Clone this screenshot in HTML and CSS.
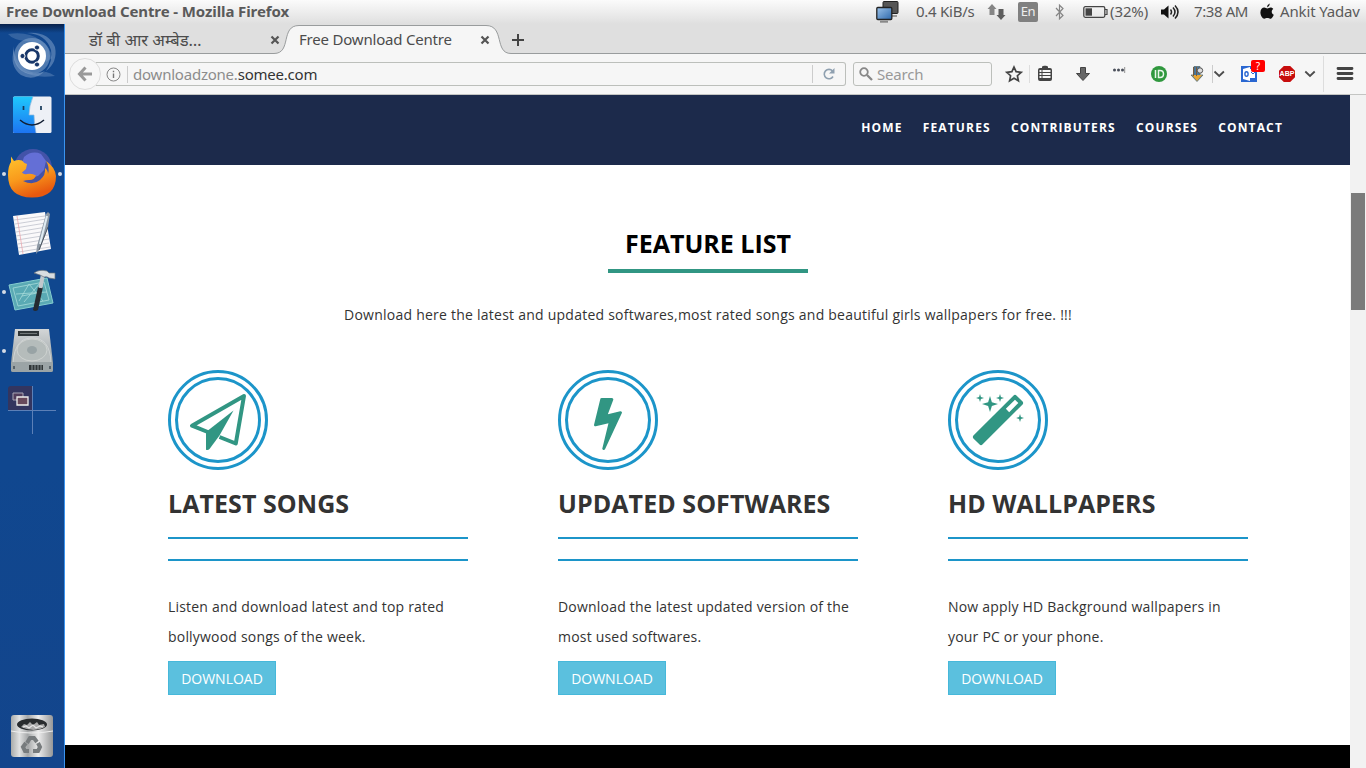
FILE: index.html
```
<!DOCTYPE html>
<html lang="en">
<head>
<meta charset="utf-8">
<title>Free Download Centre</title>
<link rel="stylesheet" href="styles.css">
</head>
<body>
<div class="desktop">
  <header class="panel">
    <div class="panel-title">Free Download Centre - Mozilla Firefox</div>
    <svg class="panel-net" width="24" height="24" viewBox="0 0 24 24">
      <defs><linearGradient id="scr" x1="0" y1="0" x2="1" y2="1"><stop offset="0" stop-color="#9cc3ea"/><stop offset="1" stop-color="#2d68ab"/></linearGradient></defs>
      <rect x="7" y="1.500" width="15" height="12" rx="1" fill="#555" stroke="#222"/><path d="M16 16h5" stroke="#999" stroke-width="2"/>
      <rect x=".8" y="7.500" width="15" height="12" rx="1" fill="url(#scr)" stroke="#222" stroke-width="1.300"/><path d="M4 21.700h8" stroke="#888" stroke-width="2"/>
    </svg>
    <div class="panel-rate">0.4 KiB/s</div>
    <svg class="panel-arrows" width="20" height="24" viewBox="0 0 20 24"><path d="M5 4l4.500 5H7.500v6h-5V9H.5z" fill="#858585"/><path d="M14 20l-4.500-5h2V9h5v6h2z" fill="#5d5d5d"/></svg>
    <div class="panel-lang">En</div>
    <svg class="panel-bt" width="10" height="24" viewBox="0 0 10 24"><path d="M1 8l7 7.500-3.500 3.300V5.200L8 8.500 1 16" fill="none" stroke="#858585" stroke-width="1.200"/></svg>
    <svg class="panel-battery" width="26" height="24" viewBox="0 0 26 24"><rect x=".8" y="6.700" width="21" height="10.600" rx="1.500" fill="none" stroke="#444" stroke-width="1.300"/><path d="M22 9.500h2v5h-2" fill="none" stroke="#444" stroke-width="1.200"/><path d="M2.500 8.300h6.500v7.400H2.500z" fill="#444"/></svg>
    <div class="panel-pct">(32%)</div>
    <svg class="panel-vol" width="20" height="24" viewBox="0 0 20 24"><path d="M0 9.500h3l4.500-4v13L3 14.500H0z" fill="#111"/><path d="M9.500 9.500q2 2.500 0 5M12 7.500q4 4.500 0 9M14 5.500q6 6.500 0 13" fill="none" stroke="#222" stroke-width="1.500"/></svg>
    <div class="panel-time">7:38 AM</div>
    <svg class="panel-apple" width="14" height="24" viewBox="0 0 14 24"><path d="M9.800 3.500q.1 2.700-2.900 3.900Q7 4.500 9.800 3.500zM7.200 8.400c1.300 0 2-.9 3.400-.9 1 0 2 .5 2.700 1.500-2.300 1.400-2 4.600.5 5.700-.8 2-2 4.100-3.500 4.100-1.200 0-1.600-.7-3-.7s-1.900.7-3 .7C2.500 18.800.4 15.500.4 12.600c0-3.200 1.900-5 3.900-5 1.200 0 2.200.8 2.900.8z" fill="#111"/></svg>
    <div class="panel-user">Ankit Yadav</div>
  </header>

  <aside class="launcher">
    <svg class="app" width="64" height="59" viewBox="0 0 64 59">
      <circle cx="32" cy="29" r="18" fill="#9db8da" opacity=".45"/>
      <g fill="#86a5cd"><path d="M8 7q20-3 32 6 11 7 12 18l-6 4Q44 14 26 14 13 13 8 7z" opacity=".3"/><path d="M13 19q-1 16 8 24 12 9 34 6-4-3-9-4-16 3-23-5-8-6-10-21z" opacity=".35"/><path d="M27 6q19 1 24 17 2 11-5 21 12-9 9-24Q48 4 27 6z" opacity=".5"/><path d="M14 22q-1 15 9 22 10 6 22 0-11 11-24 4Q9 39 14 22z" opacity=".5"/></g>
      <circle cx="32" cy="29" r="14" fill="#fff"/><circle cx="32" cy="29" r="6.300" fill="none" stroke="#173669" stroke-width="3"/><g fill="#173669" stroke="#fff" stroke-width="1"><circle cx="22.500" cy="29" r="2.600"/><circle cx="37" cy="20.500" r="2.600"/><circle cx="37" cy="37.500" r="2.600"/></g>
    </svg>
    <svg class="app" width="64" height="59" viewBox="0 0 64 59">
      <defs><linearGradient id="fa" x1="0" y1="0" x2="0" y2="1"><stop offset="0" stop-color="#1fc8fc"/><stop offset="1" stop-color="#1d74f2"/></linearGradient></defs>
      <rect x="13" y="10.500" width="38.500" height="36.500" rx="1.500" fill="#edf0f6"/><path d="M14.500 10.500H33Q29 20 29 29h5q0 9 2 18H14.500Q13 47 13 45.500V12q0-1.500 1.500-1.500z" fill="url(#fa)"/>
      <path d="M33 10.500Q29 20 29 29h5q0 9 2 18" fill="none" stroke="#8fb4da" stroke-width=".7"/><path d="M23.500 20v4M41 20v4" fill="none" stroke="#153959" stroke-width="1.700"/><path d="M20 34q12 10 24 0" fill="none" stroke="#111d32" stroke-width="1.500"/>
    </svg>
    <svg class="app" width="64" height="59" viewBox="0 0 64 59">
      <defs><linearGradient id="fx" x1="0" y1="0" x2=".4" y2="1"><stop offset="0" stop-color="#ffc52e"/><stop offset=".55" stop-color="#f99a1c"/><stop offset="1" stop-color="#e8590f"/></linearGradient></defs>
      <circle cx="33" cy="23" r="19" fill="#4353a8"/><path d="M24 12q8-7 17-3l5 7-2 9-6 6-11 3-6-8 4-5-3-3z" fill="#646fd6"/>
      <path d="M11 11.500l3 4.500q4-1.500 8-.5 2 3 5 3.500l-1 5-4 3.500q2 2.500 5 1.500 5-1 9 1.500-2 5-7 4.500-3 0-6 1 10 5 17-1 6-5 5-12 3 2 3 6 2-7-2-13 9 6 10 15 0 21.500-24 21.500T8 30Q8 21 11 17z" fill="url(#fx)"/>
      <g fill="#d5dbe5"><circle cx="4" cy="29" r="2"/><circle cx="60" cy="29" r="2"/></g>
    </svg>
    <svg class="app" width="64" height="59" viewBox="0 0 64 59">
      <path d="M13 12l32-4 6 37-32 6z" fill="#faf9fa"/><path d="M14 16l31-4M15 20l31-5M15 24l31-5M16 28l31-5M16 32l31-5M17 36l31-5M18 40l31-5M18 44l31-5M19 48l31-5" stroke="#bfc1cb" stroke-width=".8"/><path d="M17 12l6 38" stroke="#eba8ae" stroke-width=".8"/>
      <path d="M36 50l1-8 9-32 2-2 2 2-2 13-8 22z" fill="#8d98a4"/><path d="M40 40l7-28" stroke="#e0ecf3" stroke-width="2"/><path d="M39 46l9-23" stroke="#4b5560"/>
    </svg>
    <svg class="app" width="64" height="59" viewBox="0 0 64 59">
      <path d="M9 22l38-7 6 25-38 7z" fill="#5aaab4" stroke="#86ced0"/><path d="M13 25l31-6 5 18-31 6zM19 38l10-17 14 17M22 33l20-4M24 39L40 20M16 31l31-2" fill="none" stroke="#a7dbd9" stroke-width=".8"/>
      <path d="M38 24h5l-5 23q-3 2-5 0z" fill="#252a30"/><path d="M43 11l-2.500 14" stroke="#c1c8cd" stroke-width="4"/><path d="M34 10q5-4 13-2l2 2 6 0v6l-6-1q-2-2-5-1-3-2-10-4z" fill="#d8dde1" stroke="#68727b" stroke-width=".7"/><circle cx="4" cy="29" r="2" fill="#d5dbe5"/>
    </svg>
    <svg class="app" width="64" height="59" viewBox="0 0 64 59">
      <defs><linearGradient id="hd" x1="0" y1="0" x2="0" y2="1"><stop offset="0" stop-color="#d3d6d7"/><stop offset="1" stop-color="#8c9698"/></linearGradient></defs>
      <path d="M15 7h34l4 34v7q0 2-2 2H13q-2 0-2-2v-7z" fill="url(#hd)"/><path d="M13 40Q15 16 32 16q18 0 19 24" fill="#b8bebe" stroke="#dde0df" stroke-width=".7"/><ellipse cx="32" cy="28" rx="15" ry="11" fill="#b5bcbb" stroke="#d8dbd9" stroke-width=".7"/><ellipse cx="32" cy="28" rx="5" ry="4" fill="#98a3a5"/><path d="M18 9h21v5H18z" fill="#303638"/><path d="M20 11.500h17" stroke="#73797a"/><path d="M11 41h42v7q0 2-2 2H13q-2 0-2-2z" fill="#9ba4a6"/><path d="M29 43h14v5H29z" fill="#303638"/><path d="M32 43v5m3-5v5m3-5v5m3-5v5" stroke="#879194"/><path d="M14 44v3m36-3v3" stroke="#59636a" stroke-width="2"/><circle cx="4" cy="29" r="2" fill="#d5dbe5"/>
    </svg>
    <svg class="workspace" width="48" height="48" viewBox="0 0 48 48"><path d="M3 0h21v24H0V3q0-3 3-3z" fill="#33355f"/><path d="M24.500 0v48M0 24.500h48" stroke="#5c80b7" fill="none"/><path d="M5 7h10v7H5z" fill="#513d5b" stroke="#a8a6b5"/><path d="M9 11h11v8H9z" fill="#68495b" stroke="#eee" stroke-width="1.300"/></svg>
    <svg class="trash" width="44" height="44" viewBox="0 0 44 44">
      <defs><linearGradient id="tr"><stop offset="0" stop-color="#a9abaa"/><stop offset=".2" stop-color="#e1e2e2"/><stop offset=".4" stop-color="#a5a7a8"/><stop offset=".65" stop-color="#ececec"/><stop offset="1" stop-color="#969798"/></linearGradient></defs>
      <rect x="1" y="1" width="42" height="42" rx="3" fill="url(#tr)"/><ellipse cx="22" cy="10.500" rx="15" ry="6" fill="#292c2e"/><path d="M11 13l3-3 3 1 3-3 3 3 4-3 2 3 5-1 1 3q-11 6-24 0z" fill="#aaa"/><path d="M13 13l3-1 3 2 4-3 3 3 4-2 3 1" fill="none" stroke="#e5e5e5" stroke-width="1.300"/><path d="M1 17q20 4 42 0" fill="none" stroke="#eee"/>
      <g fill="none" stroke="#777b7d" stroke-width="4"><path d="M17 29l3-5h4l3 4"/><path d="M28 29l2 4-2 4h-5"/><path d="M19 37h-4l-2-4 3-4"/></g>
    </svg>
  </aside>

  <main class="browser">
    <div class="tabs">
      <svg class="tab-shape" width="1301" height="30" viewBox="0 0 1301 30"><path d="M0 29.500h209c18 0 6-28 25-28h187c19 0 8 28 25 28h855v.5H0z" fill="#f6f6f6"/><path d="M0 29.500h209c18 0 6-28 25-28h187c19 0 8 28 25 28h855" fill="none" stroke="#999c9d"/></svg>
      <div class="tab tab-back"><span class="hindi">डॉ बी आर अम्बेड…</span><svg width="10" height="10" viewBox="0 0 10 10"><path d="M1.500 1.500l7 7m0-7l-7 7" stroke="#555" stroke-width="2.200"/></svg></div>
      <div class="tab tab-front"><span class="tab-name">Free Download Centre</span><svg width="10" height="10" viewBox="0 0 10 10"><path d="M1.500 1.500l7 7m0-7l-7 7" stroke="#555" stroke-width="2.200"/></svg></div>
      <svg class="newtab" width="14" height="14" viewBox="0 0 14 14"><path d="M7 1v12M1 7h12" stroke="#444" stroke-width="2"/></svg>
    </div>

    <div class="toolbar">
      <svg class="back" width="34" height="40" viewBox="0 0 34 40"><circle cx="17" cy="20" r="15.500" fill="#f7f7f7" stroke="#ddd"/><path d="M11.500 20H24M17.500 13.500L11.500 20l6 6.500" fill="none" stroke="#999" stroke-width="3"/></svg>
      <div class="urlbar">
        <svg width="15" height="15" viewBox="0 0 15 15"><circle cx="7.500" cy="7.500" r="6.500" fill="none" stroke="#888"/><path d="M7.500 6.500v4.500M7.500 3.700v1.600" stroke="#777" stroke-width="1.400"/></svg>
        <div class="url"><span class="sub">downloadzone.</span>somee.com</div>
        <div class="reload"><svg width="14" height="14" viewBox="0 0 14 14"><path d="M11 9.500A4.700 4.700 0 1 1 10.500 4" fill="none" stroke="#8fa0b0" stroke-width="1.600"/><path d="M12.500 1v5.500H7z" fill="#8fa0b0"/></svg></div>
      </div>
      <div class="search"><svg width="14" height="14" viewBox="0 0 14 14"><circle cx="5" cy="5" r="3.800" fill="none" stroke="#888" stroke-width="1.800"/><path d="M8 8l5 5" stroke="#888" stroke-width="2.300"/></svg><span>Search</span></div>
      <div class="tools">
        <svg width="30" height="40" viewBox="0 0 30 40"><path d="M14 13l2.100 4.700 5.100.6-3.800 3.400 1 5.100-4.400-2.600-4.400 2.600 1-5.100-3.800-3.400 5.100-.6z" fill="none" stroke="#444" stroke-width="1.700"/><path d="M29.500 11v18" stroke="#ddd"/></svg>
        <svg width="30" height="40" viewBox="0 0 30 40"><path d="M12 14v-1.500l2-.8h2l2 .8V14h2q2 0 2 2v9q0 2-2 2H10q-2 0-2-2v-9q0-2 2-2z" fill="#444"/><path d="M9.500 17h2m1 0h8M9.500 20h2m1 0h8M9.500 23h2m1 0h8" stroke="#f6f6f6" stroke-width="2"/></svg>
        <svg width="46" height="40" viewBox="0 0 46 40"><path d="M20.500 13.500h5v6H29.500L23 26.500 16.500 19.500h4z" fill="#666" stroke="#444"/></svg>
        <svg width="26" height="40" viewBox="0 0 26 40"><g fill="#4a4f5a"><circle cx="8.500" cy="16" r="1.500"/><circle cx="12.500" cy="16" r="1.500"/><circle cx="16.500" cy="16" r="1.500"/></g><path d="M18.700 13v6" stroke="#777" stroke-width=".8"/></svg>
        <svg width="54" height="40" viewBox="0 0 54 40"><circle cx="27" cy="20" r="8" fill="#30983e"/><path d="M23.500 16v8M26.500 16.500h1.500q3.500 0 3.500 3.500t-3.500 3.500h-1.500z" fill="none" stroke="#e9f6ea" stroke-width="1.500"/></svg>
        <svg width="22" height="40" viewBox="0 0 22 40"><path d="M8 12.500h6V21h3l-6 6.500L5 21h3z" fill="#4779a2" stroke="#566" stroke-width=".7"/><path d="M6 21h10l-5 6z" fill="#e9a632"/><path d="M7.500 13v9m3-9v9" stroke="#75593c"/><circle cx="14" cy="16.500" r="2.700" fill="#ddd" stroke="#555"/></svg>
        <svg width="22" height="40" viewBox="0 0 22 40"><path d="M4.500 11v18" stroke="#ccc"/><path d="M6.500 17.500l4.700 4.500 4.700-4.500" fill="none" stroke="#4c4c4c" stroke-width="1.800"/></svg>
        <div class="outlook"><svg width="42" height="40" viewBox="0 0 42 40"><path d="M11 12h16v16H11z" fill="#2a67d1"/><path d="M13 15l7-2v14l-7-2zM20 15h5v9h-5" fill="#fff"/><path d="M21 18l2 2 2-2" fill="none" stroke="#2a67d1"/><ellipse cx="16.500" cy="20" rx="1.600" ry="2.200" fill="none" stroke="#2a67d1" stroke-width="1.400"/></svg><span class="alert">?</span></div>
        <div class="abp"><span>ABP</span></div>
        <svg width="16" height="40" viewBox="0 0 16 40"><path d="M3.300 17.500L8 22l4.700-4.500" fill="none" stroke="#4c4c4c" stroke-width="1.800"/></svg>
        <svg width="48" height="40" viewBox="0 0 48 40"><path d="M5.500 2v36" stroke="#ddd"/><path d="M20 14.500h14M20 19.500h14M20 24.500h14" stroke="#444" stroke-width="2.800" stroke-linecap="round"/></svg>
      </div>
    </div>

    <div class="viewport">
      <div class="site">
        <nav class="site-nav"><a>HOME</a><a>FEATURES</a><a>CONTRIBUTERS</a><a>COURSES</a><a>CONTACT</a></nav>
        <section class="features">
          <h1 class="heading"><span>FEATURE LIST</span></h1>
          <p class="intro">Download here the latest and updated softwares,most rated songs and beautiful girls wallpapers for free. !!!</p>
          <div class="cards">
            <article class="card">
              <svg class="emblem" width="100" height="100" viewBox="0 0 100 100"><g fill="none" stroke="#1c95c9" stroke-width="3"><circle cx="50" cy="50" r="48.500"/><circle cx="50" cy="50" r="41.500"/></g><path d="M51.500 67l16.300 6.500L76 26 24 55.700 41 62.500" fill="none" stroke="#319683" stroke-width="4" stroke-linejoin="round"/><path d="M65.500 40.500L51.300 65.800 41.500 79q-1.500 1.600-3.500.7V62z" fill="#319683"/></svg>
              <h2>LATEST SONGS</h2><hr><hr>
              <p>Listen and download latest and top rated<br>bollywood songs of the week.</p><a class="button">DOWNLOAD</a>
            </article>
            <article class="card">
              <svg class="emblem" width="100" height="100" viewBox="0 0 100 100"><g fill="none" stroke="#1c95c9" stroke-width="3"><circle cx="50" cy="50" r="48.500"/><circle cx="50" cy="50" r="41.500"/></g><path transform="translate(22 24) scale(.03125)" fill="#319683" d="M1333 566q18 20 7 44l-540 1157q-13 25-42 25-4 0-14-2-17-5-25.500-19t-4.500-30l197-808-406 101q-4 1-12 1-18 0-31-11-18-15-13-39l201-825q4-14 16-23t28-9h328q19 0 32 12.500t13 29.500q0 8-5 18l-171 463 396-98q8-2 12-2 19 0 34 15z"/></svg>
              <h2>UPDATED SOFTWARES</h2><hr><hr>
              <p>Download the latest updated version of the<br>most used softwares.</p><a class="button">DOWNLOAD</a>
            </article>
            <article class="card">
              <svg class="emblem" width="100" height="100" viewBox="0 0 100 100"><g fill="none" stroke="#1c95c9" stroke-width="3"><circle cx="50" cy="50" r="48.500"/><circle cx="50" cy="50" r="41.500"/></g><path transform="translate(22 24) scale(.03125)" fill="#319683" d="M1254 581l293-293-107-107-293 293zm447-293q0 27-18 45l-1286 1286q-18 18-45 18t-45-18l-198-198q-18-18-18-45t18-45l1286-1286q18-18 45-18t45 18l198 198q18 18 18 45zm-1351-190l98 30-98 30-30 98-30-98-98-30 98-30 30-98zm350 162l196 60-196 60-60 196-60-196-196-60 196-60 60-196zm930 478l98 30-98 30-30 98-30-98-98-30 98-30 30-98zm-640-640l98 30-98 30-30 98-30-98-98-30 98-30 30-98z"/></svg>
              <h2>HD WALLPAPERS</h2><hr><hr>
              <p>Now apply HD Background wallpapers in<br>your PC or your phone.</p><a class="button">DOWNLOAD</a>
            </article>
          </div>
        </section>
      </div>
      <div class="scrollbar"><div class="thumb"></div></div>
    </div>
  </main>
</div>
</body>
</html>
```
FILE: styles.css
```
* { box-sizing: border-box; }
body { margin: 0; width: 1366px; height: 768px; overflow: hidden; font-family: "Open Sans", "Noto Sans", sans-serif; }
svg { display: block; flex: none; }
.desktop { display: grid; grid-template-columns: 65px 1301px; grid-template-rows: 24px 744px; }

/* top panel */
.panel { grid-column: 1 / 3; display: grid; align-items: center; white-space: nowrap; color: #5a5a5a; font: 15px/22px "Noto Sans", sans-serif; background: linear-gradient(#fbfbfb, #dfdfdf);
  grid-template-columns: 876px 40px 71px 31px 37px 28px 27px 51px 33px 66px 20px 86px; }
.panel-title, .panel-rate, .panel-pct, .panel-time, .panel-user { padding-bottom: 2px; }
.panel-title { padding-left: 6px; font-weight: 700; letter-spacing: -0.1px; }
.panel-rate { letter-spacing: -0.25px; }
.panel-lang { width: 20px; height: 20px; border-radius: 2px; background: #808080; color: #eee; font-size: 13px; line-height: 19px; text-align: center; letter-spacing: -0.3px; }
.panel-pct { letter-spacing: -0.1px; }
.panel-time { letter-spacing: -0.4px; }
.panel-user { letter-spacing: -0.15px; }

/* launcher */
.launcher { display: flex; flex-direction: column; padding-top: 3px; border-right: 1px solid #3a94f0; background: linear-gradient(#07204a, #10478f 9px, #10478f 60%, #13458c); }
.workspace { margin: 5px 0 0 8px; }
.trash { margin: auto 0 10px 10px; }

/* tab strip */
.browser { display: flex; flex-direction: column; min-width: 0; }
.tabs { position: relative; height: 30px; display: flex; align-items: center; background: #dfdfdf; color: #4c4c4c; font: 15px/20px "Noto Sans", sans-serif; }
.tab-shape { position: absolute; left: 0; top: 0; }
.tab { position: relative; display: flex; align-items: center; justify-content: space-between; white-space: nowrap; padding-top: 2px; }
.tab-back { width: 191px; margin-left: 24px; }
.tab-front { width: 191px; margin-left: 19px; }
.hindi { font-size: 16.5px; }
.tab-name { letter-spacing: -0.2px; padding-bottom: 2px; }
.newtab { position: relative; margin: 2px 0 0 21px; }

/* navigation toolbar */
.toolbar { height: 41px; display: flex; background: #f6f6f6; border-bottom: 1px solid #c4c5c3; color: #444; font: 15px/20px "Noto Sans", sans-serif; }
.back { margin-left: 3px; margin-right: -6px; position: relative; z-index: 1; }
.urlbar { width: 750px; height: 24px; margin-top: 8px; padding-left: 10px; display: flex; align-items: center; border: 1px solid #bcbfbb; border-left: 0; border-radius: 0 3px 3px 0; }
.url { flex: 1; margin-left: 6px; padding-left: 5px; height: 17px; line-height: 17px; letter-spacing: -0.22px; border-left: 1px solid #ccc; color: #333; }
.sub { color: #8c8c8c; }
.reload { width: 33px; height: 18px; padding: 2px 0 0 9px; border-left: 1px solid #ccc; }
.search { width: 139px; height: 24px; margin: 8px 8px 0 7px; padding-left: 5px; display: flex; align-items: center; gap: 4px; border: 1px solid #bcbfbb; border-radius: 3px; color: #999; letter-spacing: -0.2px; }
.tools { display: flex; }
.outlook { position: relative; }
.alert { position: absolute; left: 21px; top: 6px; width: 14px; height: 12px; border-radius: 2px; background: #f00; color: #fff; font-size: 10px; line-height: 12px; text-align: center; }
.abp { width: 30px; height: 40px; display: grid; place-items: center; }
.abp span { width: 16px; height: 16px; color: #fff; background: #c70d0d; clip-path: polygon(30% 0, 70% 0, 100% 30%, 100% 70%, 70% 100%, 30% 100%, 0 70%, 0 30%); font: 700 7px/16px "Liberation Sans", sans-serif; text-align: center; }

/* web page */
.viewport { height: 673px; display: grid; grid-template-columns: 1285px 16px; background: #000; }
.site-nav { height: 70px; padding-right: 67px; display: flex; justify-content: flex-end; align-items: center; gap: 20.2px; background: #1c2a4b; color: #fff; font-size: 12px; font-weight: 700; line-height: 20px; letter-spacing: 1.14px; padding-bottom: 5px; }
.features { height: 580px; padding-top: 61px; background: #fff; color: #333; }
.heading { width: 200px; height: 47px; margin: 0 auto; border-bottom: 4px solid #319683; color: #000; font-size: 25px; font-weight: 700; line-height: 34px; text-align: center; white-space: nowrap; position: relative; left: 0.5px; }
.intro { margin: 27px 0 40px; padding-left: 1px; font-size: 14px; line-height: 30px; letter-spacing: 0.24px; text-align: center; }
.cards { display: grid; grid-template-columns: 300px 300px 300px; column-gap: 90px; padding-left: 103px; }
.card h2 { margin: 18px 0 19px; font-size: 25px; font-weight: 700; line-height: 30px; letter-spacing: 0.06px; white-space: nowrap; }
.card hr { height: 2px; margin: 0 0 20px; border: 0; background: #1c95c9; }
.card p { margin: 31px 0 9px; font-size: 14px; line-height: 30px; letter-spacing: 0.2px; white-space: nowrap; }
.button { display: block; width: 108px; height: 34px; border: 1px solid #46b8da; background: #5bc0de; color: #fff; font-size: 14px; line-height: 33px; text-align: center; }
.scrollbar { padding: 98px 1px 0; background: #f2f2f2; }
.thumb { height: 117px; background: #7b7b7b; }
```
